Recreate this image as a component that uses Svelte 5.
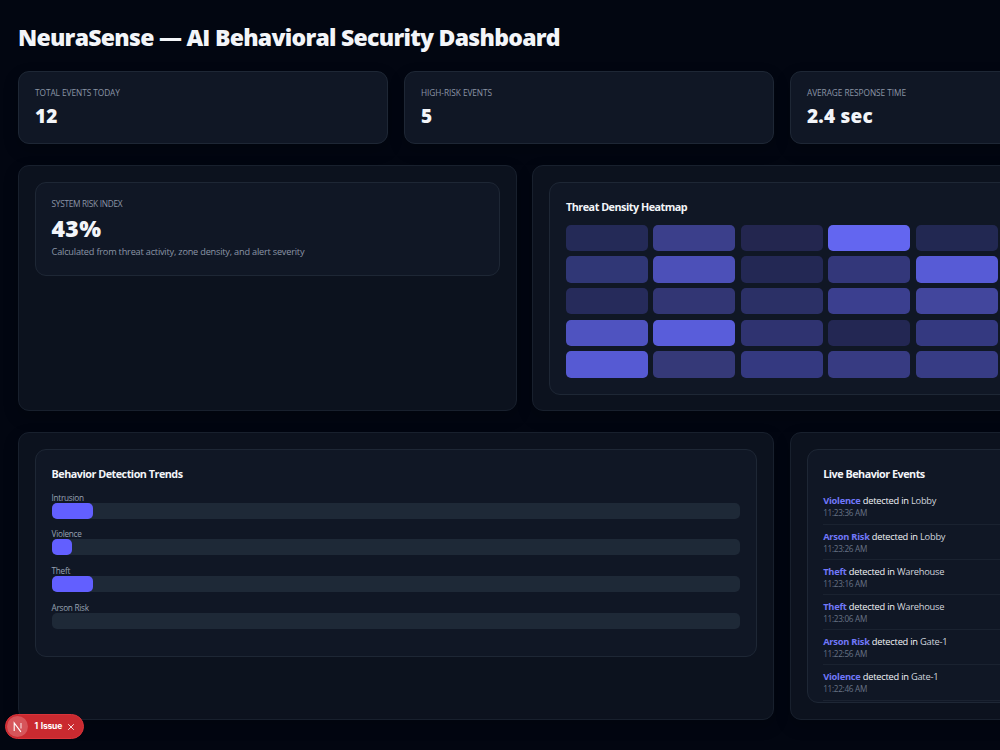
<script>
  const stats = [
    { label: 'TOTAL EVENTS TODAY', value: '12' },
    { label: 'HIGH-RISK EVENTS', value: '5' },
    { label: 'AVERAGE RESPONSE TIME', value: '2.4 sec' }
  ];
  const cells = [
    '#242a57', '#3b3f8b', '#23264f', '#6366f0', '#222852',
    '#303776', '#4c50b8', '#232854', '#33377a', '#575bd6',
    '#262b5b', '#323674', '#2b3066', '#3b3f8f', '#42469d',
    '#4f53c0', '#595dda', '#2f3370', '#232753', '#343980',
    '#565ad3', '#353978', '#343980', '#373b82', '#373c85'
  ];
  const trends = [
    { name: 'Intrusion', pct: 6 },
    { name: 'Violence', pct: 3 },
    { name: 'Theft', pct: 6 },
    { name: 'Arson Risk', pct: 0 }
  ];
  const events = [
    { type: 'Violence', zone: 'Lobby', time: '11:23:36 AM' },
    { type: 'Arson Risk', zone: 'Lobby', time: '11:23:26 AM' },
    { type: 'Theft', zone: 'Warehouse', time: '11:23:16 AM' },
    { type: 'Theft', zone: 'Warehouse', time: '11:23:06 AM' },
    { type: 'Arson Risk', zone: 'Gate-1', time: '11:22:56 AM' },
    { type: 'Violence', zone: 'Gate-1', time: '11:22:46 AM' }
  ];
</script>

<div class="viewport">
  <main>
    <h1>NeuraSense — AI Behavioral Security Dashboard</h1>

    <section class="stats">
      {#each stats as s}
        <div class="card stat">
          <div class="label">{s.label}</div>
          <div class="value">{s.value}</div>
        </div>
      {/each}
    </section>

    <section class="middle">
      <div class="panel">
        <div class="card risk">
          <div class="label tight">SYSTEM RISK INDEX</div>
          <div class="big">43%</div>
          <p>Calculated from threat activity, zone density, and alert severity</p>
        </div>
      </div>
      <div class="panel">
        <div class="card heat">
          <h2>Threat Density Heatmap</h2>
          <div class="grid">
            {#each cells as c}
              <span style="background:{c}"></span>
            {/each}
          </div>
        </div>
      </div>
    </section>

    <section class="bottom">
      <div class="panel">
        <div class="card trends">
          <h2>Behavior Detection Trends</h2>
          {#each trends as t}
            <div class="trend">
              <div class="name">{t.name}</div>
              <div class="track"><div class="fill" style="width:{t.pct}%"></div></div>
            </div>
          {/each}
        </div>
      </div>
      <div class="panel">
        <div class="card live">
          <h2>Live Behavior Events</h2>
          {#each events as e}
            <div class="event">
              <div class="line"><b>{e.type}</b> detected in <span>{e.zone}</span></div>
              <div class="time">{e.time}</div>
            </div>
          {/each}
        </div>
      </div>
    </section>
  </main>

  <div class="issue">
    <div class="mark">
      <svg width="12" height="12" viewBox="0 0 12 12" fill="none">
        <path d="M2.2 10V2L8.9 10.8" stroke="#fff" stroke-width="1.1" />
        <path d="M9 2V7.6" stroke="#fff" stroke-width="1.1" opacity=".8" />
      </svg>
    </div>
    <span>1 Issue</span>
    <svg width="8" height="8" viewBox="0 0 8 8">
      <path d="M1.2 1.2L6.8 6.8M6.8 1.2L1.2 6.8" stroke="#fff" stroke-opacity=".85" stroke-width="1" />
    </svg>
  </div>
</div>

<style>
  :global(body) { margin: 0; background: #020510; }
  .viewport {
    position: relative;
    width: 1000px;
    height: 750px;
    overflow: hidden;
    background: #020611;
    color: #f3f5f9;
    font-family: 'Open Sans', 'Noto Sans', sans-serif;
  }
  * { box-sizing: border-box; }
  main { width: 1178px; padding: 21px 18px 0; }
  h1 {
    margin: 0 0 18px;
    font-size: 23px;
    line-height: 32px;
    font-weight: 800;
    letter-spacing: -0.73px;
    white-space: nowrap;
  }
  section { display: grid; gap: 16px; }
  .stats { grid-template-columns: repeat(3, 370px); margin-bottom: 21px; }
  .middle { grid-template-columns: 498.8px 498.8px; height: 246px; margin-bottom: 21px; }
  .middle { gap: 15.6px; }
  .bottom { grid-template-columns: 756px 370px; height: 287.5px; }
  .card {
    background: #101725;
    border: 1px solid #1e2735;
    border-radius: 11px;
    padding: 16px;
  }
  .panel {
    background: #0c121e;
    border: 1px solid #18202d;
    border-radius: 11px;
    padding: 15.6px 16px;
    box-shadow: 0 6px 16px rgba(0, 0, 0, 0.2);
  }
  .stat { height: 73px; padding-top: 15px; box-shadow: 0 6px 16px rgba(0, 0, 0, 0.2); }
  .label {
    font-size: 8.3px;
    line-height: 11px;
    color: #8b95a5;
    letter-spacing: -0.06px;
  }
  .label.tight { letter-spacing: -0.3px; }
  .value { font-size: 19px; line-height: 24px; margin-top: 6px; font-weight: 800; letter-spacing: 0.2px; }
  .risk { height: 94px; padding: 15px 15.6px; }
  .big { font-size: 23px; line-height: 28px; margin-top: 5px; font-weight: 800; letter-spacing: 0.3px; }
  p {
    margin: 3px 0 0;
    font-size: 9.2px;
    line-height: 13px;
    color: #8b95a5;
    letter-spacing: -0.21px;
  }
  .heat { height: 213px; padding: 15px 15.6px; }
  h2 {
    margin: 2px 0 0;
    font-size: 10.8px;
    line-height: 14px;
    font-weight: 700;
    letter-spacing: -0.5px;
  }
  .grid {
    display: grid;
    grid-template-columns: repeat(5, 1fr);
    grid-auto-rows: 26.5px;
    gap: 5.2px 5.4px;
    margin-top: 11px;
  }
  .grid span { border-radius: 5px; }
  .trends { height: 208px; padding: 15px 15.6px; }
  .trends h2 { margin-bottom: 11px; }
  .trend { height: 36.9px; }
  .name { font-size: 8.2px; line-height: 11px; color: #98a2b2; letter-spacing: -0.27px; }
  .track { height: 16px; border-radius: 5px; background: #1e2937; }
  .fill { height: 100%; border-radius: 5px; background: #625fff; }
  .live { height: 254px; padding: 15px 15.2px; overflow: hidden; }
  .live h2 { margin-bottom: 8.8px; }
  .event { height: 35.2px; padding-top: 5px; border-bottom: 1px solid #1a2230; }
  .line { font-size: 9.3px; line-height: 13px; letter-spacing: -0.24px; }
  .line b { color: #7078fa; font-weight: 700; }
  .line span { color: #d0d5dd; }
  .time { font-size: 8.2px; line-height: 11px; color: #687386; letter-spacing: -0.3px; }
  .issue {
    position: absolute;
    left: 5px;
    top: 714px;
    width: 79px;
    height: 25px;
    border-radius: 13px;
    background: #ca2a30;
    border: 1px solid #d9343a;
    display: flex;
    align-items: center;
    padding-left: 1px;
    font: 700 8.5px 'Inter', sans-serif;
    letter-spacing: -0.2px;
    word-spacing: 1px;
    color: #fff;
  }
  .issue span { margin-top: -1px; }
  .mark {
    width: 21px;
    height: 21px;
    border-radius: 50%;
    background: #d6555a;
    display: grid;
    place-items: center;
    margin-right: 6.5px;
  }
  .issue > svg { margin-left: 5px; margin-top: 1px; }
</style>
